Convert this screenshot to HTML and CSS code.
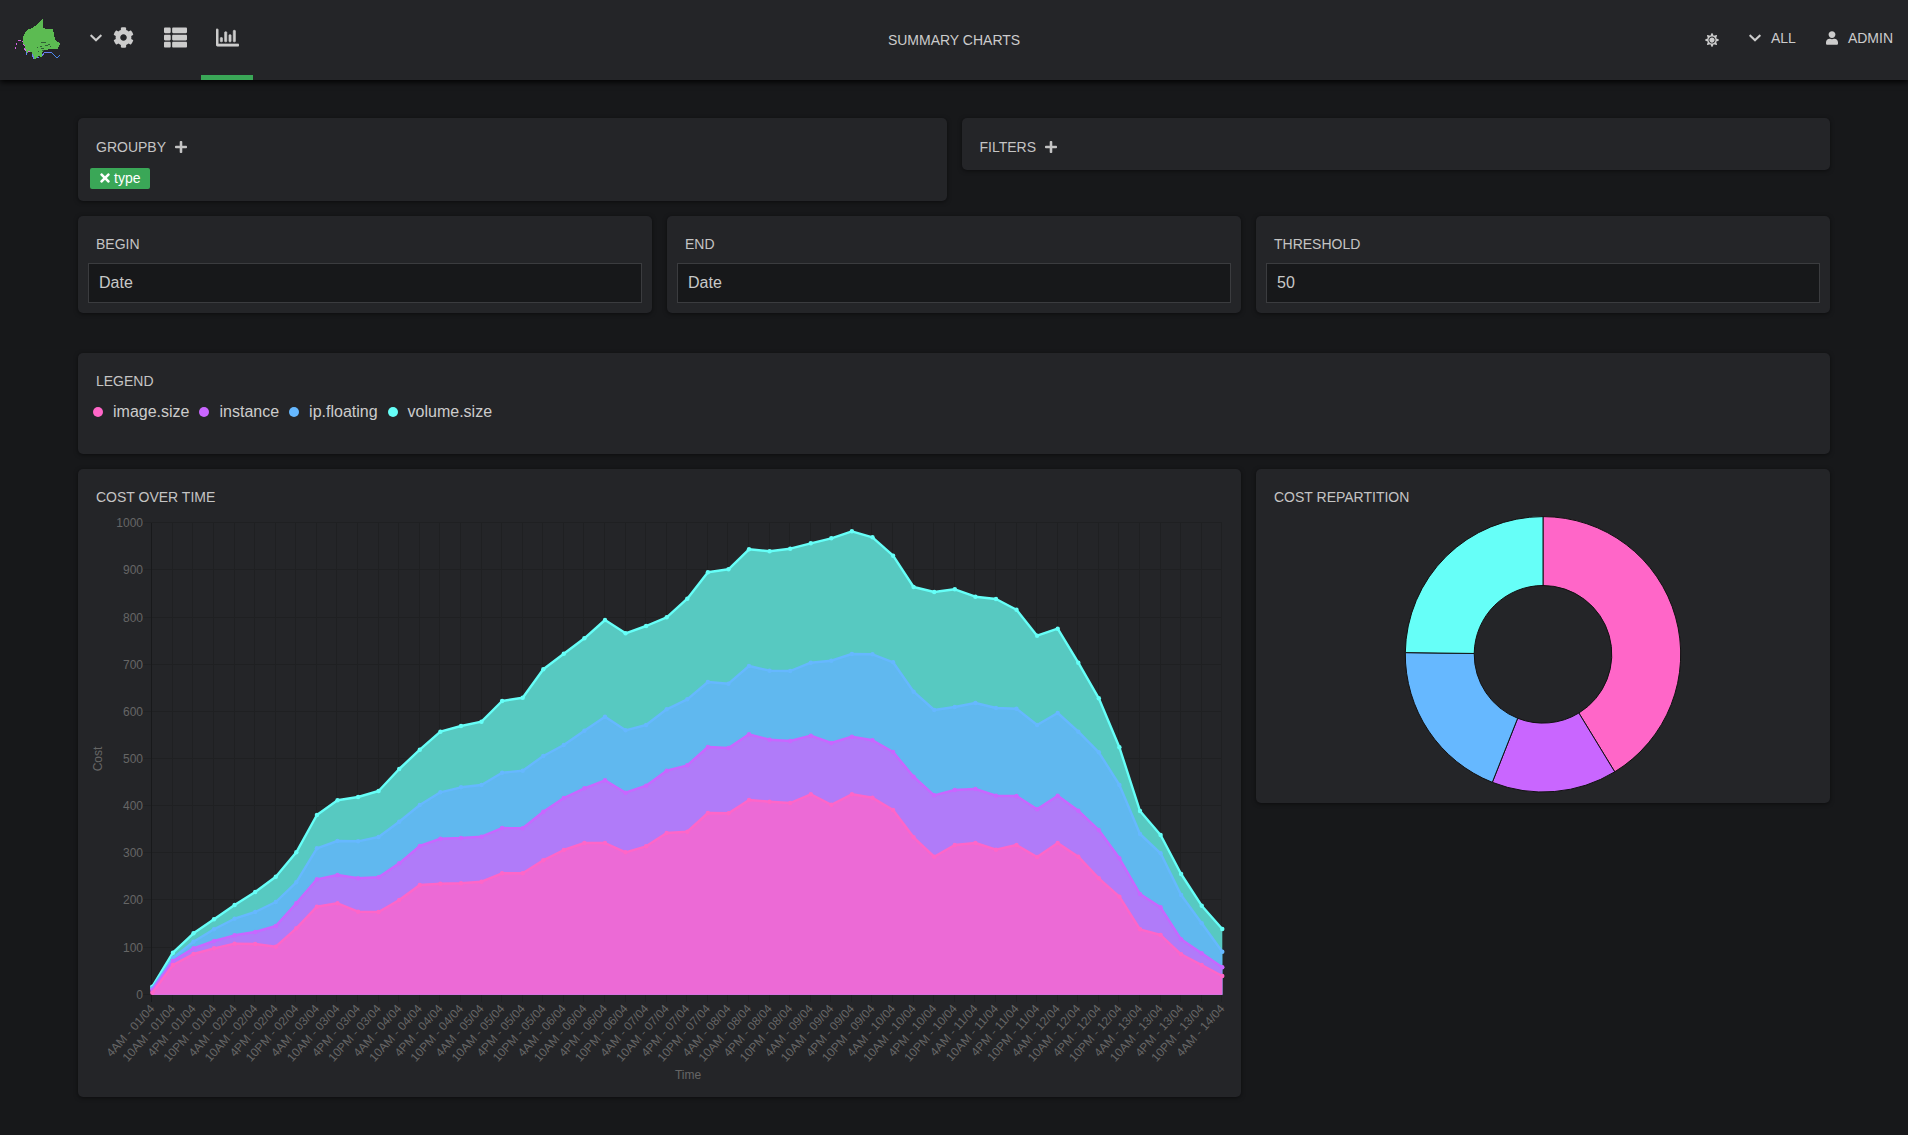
FILE: index.html
```html
<!DOCTYPE html>
<html lang="en">
<head>
<meta charset="utf-8">
<title>Summary charts</title>
<link rel="stylesheet" href="styles.css">
</head>
<body>
<header class="navbar">
  <nav class="nav-left">
    <svg class="logo" viewBox="14 17 48 44" shape-rendering="crispEdges" aria-label="logo">
      <path class="logo-head" d="M43 19V28L46 29H53L54 34L55 40L58 42L60 44L57 49.5L51 49L44 50L42 52L43 55L41 57L38 56L36 59H33L32 52L29 51.5L27 53L25 47L23 43V37L25 33L28 29.500L32 28L35 26L38 23.500Z"/>
      <path class="logo-dark" d="M41 42h5v1h-5zM45 45h3v1h-3zM48 44h2v1h-2zM37 47h1v1h-1zM40 46h2v1h-2zM41 48h3v1h-3zM50 46h1v1h-1zM38 51h1v1h-1zM42 50h2v1h-2z"/>
      <path class="logo-pink" d="M15 49l1-2M16.500 45l.5-2M18 41l1-1h2M22 41l1 1M23 44l2 2M24 48l2 3M28 51l2 0"/>
      <path class="logo-trace-a" d="M26 52l1 3M32 54l2 5M37 57l2 1M42 56l3-4h4l2 0"/>
      <path class="logo-trace-b" d="M51 52l3 3l3 3l3-3"/>
    </svg>
    <svg class="icon-chevron chevron-left" viewBox="0 0 448 512"><path d="M207.029 381.476L12.686 187.132c-9.373-9.373-9.373-24.569 0-33.941l22.667-22.667c9.357-9.357 24.522-9.375 33.901-.04L224 284.505l154.745-154.021c9.379-9.335 24.544-9.317 33.901.04l22.667 22.667c9.373 9.373 9.373 24.569 0 33.941L240.971 381.476c-9.373 9.372-24.569 9.372-33.942 0z"/></svg>
    <svg class="icon-gear" viewBox="0 0 512 512"><path d="M487.4 315.7l-42.6-24.6c4.3-23.2 4.3-47 0-70.2l42.6-24.6c4.9-2.8 7.1-8.6 5.500-14-11.100-35.600-30-67.800-54.700-94.600-3.800-4.100-10-5.100-14.800-2.300L380.800 110c-17.900-15.400-38.500-27.300-60.800-35.100V25.800c0-5.600-3.900-10.500-9.400-11.700-36.700-8.200-74.300-7.800-109.200 0-5.500 1.200-9.400 6.100-9.400 11.700V75c-22.200 7.900-42.800 19.800-60.800 35.100L88.700 85.500c-4.900-2.800-11-1.900-14.800 2.300-24.700 26.700-43.600 58.900-54.700 94.600-1.700 5.400.6 11.200 5.500 14L67.300 221c-4.300 23.200-4.300 47 0 70.200l-42.600 24.600c-4.900 2.800-7.100 8.600-5.500 14 11.100 35.600 30 67.800 54.700 94.600 3.800 4.100 10 5.100 14.800 2.300l42.600-24.600c17.900 15.400 38.500 27.300 60.800 35.100v49.200c0 5.600 3.900 10.500 9.400 11.700 36.700 8.200 74.300 7.800 109.200 0 5.500-1.200 9.400-6.100 9.400-11.700v-49.200c22.200-7.900 42.800-19.800 60.800-35.100l42.600 24.600c4.900 2.800 11 1.900 14.800-2.300 24.700-26.700 43.600-58.900 54.700-94.600 1.500-5.500-.7-11.300-5.600-14.100zM256 336c-44.100 0-80-35.900-80-80s35.900-80 80-80 80 35.900 80 80-35.900 80-80 80z"/></svg>
    <a class="nav-link">
      <svg class="icon-nav" viewBox="0 0 512 512"><path d="M149.333 216v80c0 13.255-10.745 24-24 24H24c-13.255 0-24-10.745-24-24v-80c0-13.255 10.745-24 24-24h101.333c13.255 0 24 10.745 24 24zM0 376v80c0 13.255 10.745 24 24 24h101.333c13.255 0 24-10.745 24-24v-80c0-13.255-10.745-24-24-24H24c-13.255 0-24 10.745-24 24zM125.333 32H24C10.745 32 0 42.745 0 56v80c0 13.255 10.745 24 24 24h101.333c13.255 0 24-10.745 24-24V56c0-13.255-10.745-24-24-24zm80 448H488c13.255 0 24-10.745 24-24v-80c0-13.255-10.745-24-24-24H205.333c-13.255 0-24 10.745-24 24v80c0 13.255 10.745 24 24 24zm-24-424v80c0 13.255 10.745 24 24 24H488c13.255 0 24-10.745 24-24V56c0-13.255-10.745-24-24-24H205.333c-13.255 0-24 10.745-24 24zm24 264H488c13.255 0 24-10.745 24-24v-80c0-13.255-10.745-24-24-24H205.333c-13.255 0-24 10.745-24 24v80c0 13.255 10.745 24 24 24z"/></svg>
    </a>
    <a class="nav-link is-active">
      <svg class="icon-nav icon-bars" viewBox="0 0 512 512"><path d="M396.8 352h22.400c6.400 0 12.800-6.400 12.800-12.800V108.800c0-6.400-6.400-12.800-12.800-12.800h-22.400c-6.400 0-12.800 6.400-12.800 12.800v230.400c0 6.400 6.400 12.800 12.800 12.800zm-192 0h22.400c6.400 0 12.800-6.400 12.800-12.800V140.800c0-6.400-6.400-12.800-12.800-12.800h-22.400c-6.400 0-12.800 6.400-12.800 12.800v198.400c0 6.400 6.400 12.800 12.800 12.800zm96 0h22.400c6.400 0 12.800-6.400 12.800-12.800V204.800c0-6.400-6.400-12.800-12.800-12.800h-22.400c-6.400 0-12.800 6.400-12.800 12.800v134.400c0 6.400 6.400 12.800 12.800 12.800zM496 400H48V80c0-8.840-7.160-16-16-16H16C7.160 64 0 71.160 0 80v336c0 17.670 14.330 32 32 32h464c8.840 0 16-7.160 16-16v-16c0-8.840-7.160-16-16-16zm-387.200-48h22.400c6.400 0 12.800-6.400 12.800-12.800v-70.400c0-6.400-6.400-12.800-12.800-12.800h-22.400c-6.400 0-12.800 6.400-12.800 12.800v70.400c0 6.400 6.400 12.800 12.800 12.800z"/></svg>
    </a>
  </nav>
  <div class="nav-title">SUMMARY CHARTS</div>
  <div class="nav-right">
    <svg class="icon-sun" viewBox="0 0 512 512"><path d="M256 160c-52.900 0-96 43.100-96 96s43.100 96 96 96 96-43.100 96-96-43.100-96-96-96zm246.400 80.500l-94.700-47.300 33.500-100.400c4.500-13.600-8.400-26.500-21.900-21.900l-100.400 33.500-47.400-94.800c-6.400-12.800-24.600-12.800-31 0l-47.300 94.700L92.700 70.800c-13.600-4.500-26.500 8.400-21.900 21.900l33.500 100.400-94.700 47.400c-12.800 6.400-12.800 24.600 0 31l94.700 47.300-33.500 100.500c-4.500 13.600 8.400 26.500 21.900 21.900l100.400-33.500 47.300 94.700c6.400 12.800 24.600 12.800 31 0l47.300-94.700 100.400 33.500c13.600 4.500 26.500-8.400 21.900-21.900l-33.500-100.400 94.700-47.300c13-6.500 13-24.700.2-31.100zm-155.900 106c-49.900 49.900-131.100 49.900-181 0-49.900-49.900-49.900-131.100 0-181 49.900-49.900 131.100-49.900 181 0 49.900 49.900 49.900 131.100 0 181z"/></svg>
    <span class="nav-menu nav-menu-all">
      <svg class="icon-chevron" viewBox="0 0 448 512"><path d="M207.029 381.476L12.686 187.132c-9.373-9.373-9.373-24.569 0-33.941l22.667-22.667c9.357-9.357 24.522-9.375 33.901-.04L224 284.505l154.745-154.021c9.379-9.335 24.544-9.317 33.901.04l22.667 22.667c9.373 9.373 9.373 24.569 0 33.941L240.971 381.476c-9.373 9.372-24.569 9.372-33.942 0z"/></svg>
      ALL
    </span>
    <span class="nav-menu">
      <svg class="icon-user" viewBox="0 0 448 512"><path d="M224 256c70.700 0 128-57.300 128-128S294.700 0 224 0 96 57.300 96 128s57.300 128 128 128zm89.600 32h-16.700c-22.200 10.200-46.900 16-72.900 16s-50.600-5.800-72.900-16h-16.700C60.200 288 0 348.200 0 422.400V464c0 26.500 21.500 48 48 48h352c26.500 0 48-21.500 48-48v-41.600c0-74.200-60.200-134.400-134.400-134.400z"/></svg>
      ADMIN
    </span>
  </div>
</header>

<main class="page">
  <section class="row row-two">
    <div class="card card-groupby">
      <h2 class="card-title card-title-action">GROUPBY
        <svg class="icon-plus" viewBox="0 0 448 512"><path d="M416 208H272V64c0-17.670-14.330-32-32-32h-32c-17.670 0-32 14.330-32 32v144H32c-17.670 0-32 14.330-32 32v32c0 17.670 14.330 32 32 32h144v144c0 17.670 14.330 32 32 32h32c17.670 0 32-14.330 32-32V304h144c17.670 0 32-14.330 32-32v-32c0-17.670-14.330-32-32-32z"/></svg>
      </h2>
      <span class="tag">
        <svg class="icon-x" viewBox="0 0 352 512"><path d="M242.720 256l100.070-100.070c12.280-12.280 12.280-32.190 0-44.480l-22.240-22.240c-12.280-12.280-32.190-12.280-44.480 0L176 189.280 75.930 89.210c-12.280-12.280-32.190-12.280-44.480 0L9.210 111.450c-12.280 12.280-12.280 32.190 0 44.480L109.280 256 9.210 356.070c-12.280 12.280-12.280 32.190 0 44.480l22.240 22.240c12.280 12.280 32.200 12.280 44.480 0L176 322.720l100.070 100.070c12.280 12.280 32.200 12.280 44.480 0l22.240-22.240c12.280-12.280 12.280-32.190 0-44.480L242.720 256z"/></svg>
        type
      </span>
    </div>
    <div class="card card-filters">
      <h2 class="card-title card-title-action">FILTERS
        <svg class="icon-plus" viewBox="0 0 448 512"><path d="M416 208H272V64c0-17.670-14.330-32-32-32h-32c-17.670 0-32 14.330-32 32v144H32c-17.670 0-32 14.330-32 32v32c0 17.670 14.330 32 32 32h144v144c0 17.670 14.330 32 32 32h32c17.670 0 32-14.330 32-32V304h144c17.670 0 32-14.330 32-32v-32c0-17.670-14.330-32-32-32z"/></svg>
      </h2>
    </div>
  </section>

  <section class="row row-three">
    <div class="card card-field">
      <h2 class="card-title">BEGIN</h2>
      <input class="field" placeholder="Date">
    </div>
    <div class="card card-field">
      <h2 class="card-title">END</h2>
      <input class="field" placeholder="Date">
    </div>
    <div class="card card-field">
      <h2 class="card-title">THRESHOLD</h2>
      <input class="field" value="50">
    </div>
  </section>

  <section class="card card-legend">
    <h2 class="card-title">LEGEND</h2>
    <ul class="legend">
      <li class="legend-item"><span class="dot dot-image"></span>image.size</li>
      <li class="legend-item"><span class="dot dot-instance"></span>instance</li>
      <li class="legend-item"><span class="dot dot-ip"></span>ip.floating</li>
      <li class="legend-item"><span class="dot dot-volume"></span>volume.size</li>
    </ul>
  </section>

  <section class="row row-three row-charts">
    <div class="card card-area">
      <h2 class="card-title">COST OVER TIME</h2>
      <svg id="area-chart" class="chart-area" viewBox="78 505 1163 592"></svg>
    </div>
    <div class="card card-pie">
      <h2 class="card-title">COST REPARTITION</h2>
      <svg id="pie-chart" class="chart-pie" viewBox="1256 505 574 298"></svg>
    </div>
  </section>
</main>
<script src="chart.js"></script>
</body>
</html>
```
FILE: styles.css
```css
* { box-sizing: border-box; }
html, body { margin: 0; padding: 0; }
body {
  min-height: 1135px;
  background: #17181a;
  color: #cccccc;
  font-family: "Liberation Sans", Arial, sans-serif;
  font-size: 14px;
}
svg { display: block; fill: currentColor; }

.navbar {
  display: grid;
  grid-template-columns: 1fr auto 1fr;
  align-items: center;
  height: 80px;
  background: #242528;
  box-shadow: 0 2px 6px #000;
}
.nav-left { display: flex; align-items: center; height: 80px; }
.logo { width: 48px; height: 44px; margin: 0 0 2px 14px; }
.logo-head { fill: #5cbb52; }
.logo-dark { fill: #2f5f35; }
.logo-pink { fill: none; stroke: #d65fe0; stroke-width: 1; }
.logo-trace-a { fill: none; stroke: #6a7cf0; stroke-width: 1; }
.logo-trace-b { fill: none; stroke: #4a86e8; stroke-width: 1; }
.icon-chevron { width: 12px; height: 14px; }
.chevron-left { margin: 0 0 5px 28px; }
.icon-gear { width: 21px; height: 21px; margin: 0 15px 5px 11px; }
.nav-link {
  display: flex;
  align-items: center;
  justify-content: center;
  width: 52px;
  height: 80px;
  border-bottom: 5px solid transparent;
}
.nav-link.is-active { border-bottom-color: #3aa757; }
.icon-nav { width: 23px; height: 23px; }
.icon-bars { stroke: currentColor; stroke-width: 14; }
.nav-title { font-size: 14px; text-align: center; }
.nav-right {
  display: flex;
  align-items: center;
  justify-content: flex-end;
  padding: 0 15px 4px 0;
}
.icon-sun { width: 14px; height: 14px; margin: 4px 30px 0 0; }
.nav-menu { display: flex; align-items: center; gap: 10px; }
.nav-menu-all { margin-right: 30px; }
.icon-user { width: 12px; height: 14px; }

.page {
  display: flex;
  flex-direction: column;
  padding: 38px 78px 0;
}
.row { display: grid; gap: 15px; align-items: start; }
.row-two { grid-template-columns: 1fr 1fr; margin-bottom: 15px; }
.row-three { grid-template-columns: repeat(3, 1fr); }

.card {
  background: #242528;
  border-radius: 5px;
  box-shadow: 0 1px 4px rgba(0, 0, 0, .5);
}
.card-title {
  display: flex;
  align-items: center;
  gap: 9px;
  height: 36px;
  margin: 0;
  padding: 20px 18px 0;
  font-size: 14px;
  line-height: 16px;
  font-weight: 400;
  color: #c4c4c4;
}
.card-title-action { padding-top: 22px; }
.icon-plus { width: 12px; height: 14px; }
.card-groupby { height: 83px; }
.card-filters { height: 52px; }
.tag {
  display: inline-flex;
  align-items: center;
  gap: 4px;
  height: 21px;
  margin: 14px 0 0 12px;
  padding: 0 10px 1px;
  border-radius: 2px;
  background: #3aa757;
  color: #fff;
  font-size: 14px;
}
.icon-x { width: 10px; height: 14px; }

.card-field { height: 97px; padding-bottom: 10px; }
.field {
  display: block;
  width: calc(100% - 20px);
  height: 40px;
  margin: 11px 10px 0;
  padding: 0 10px;
  border: 1px solid #3b3c3f;
  background: #17181a;
  color: #c8c8c8;
  font: 16px "Liberation Sans", Arial, sans-serif;
  outline: none;
}
.field::placeholder { color: #c8c8c8; opacity: 1; }

.card-legend { height: 101px; margin: 40px 0 15px; }
.legend {
  display: flex;
  gap: 10px;
  margin: 0;
  padding: 13px 0 0 15px;
  list-style: none;
  font-size: 16px;
  line-height: 20px;
}
.legend-item { display: flex; align-items: center; gap: 10px; }
.dot { width: 10px; height: 10px; border-radius: 50%; }
.dot-image { background: #ff66c8; }
.dot-instance { background: #c966ff; }
.dot-ip { background: #66b8ff; }
.dot-volume { background: #66fff8; }

.card-area { grid-column: span 2; height: 628px; }
.card-pie { height: 334px; }
.chart-area { width: 1163px; height: 592px; }
.chart-pie { width: 574px; height: 298px; }

.grid-line { stroke: #1f2022; stroke-width: 1; shape-rendering: crispEdges; }
.grid-axis { stroke: #18191b; stroke-width: 1; shape-rendering: crispEdges; }
.axis-text { fill: #666; font: 12px "Liberation Sans", Arial, sans-serif; }
.series-line { fill: none; stroke-width: 2.4; stroke-linejoin: round; }
.pie-slice { stroke: #111; stroke-width: 1; }
```
FILE: chart.js
```js
// Stacked cost series, as cumulative screen heights sampled in three spans.
const SPANS = [
  { base: 600, from: 0 },
  { base: 520, from: 18 },
  { base: 520, from: 36 }
];
const SERIES = [
  {
    color: '#66fff8', fill: '#57c9c1',
    samples: [
      [1160,1058,1000,958,915,876,830,757,645,601,591,573,507,449,395,378,365,303],
      [533,448,401,355,300,340,318,292,236,157,148,88,94,86,70,55,34,52],
      [107,201,216,208,230,237,269,347,326,428,535,682,873,945,1062,1157,1227]
    ]
  },
  {
    color: '#66b8ff', fill: '#60b8ef',
    samples: [
      [1165,1075,1025,988,956,936,906,847,745,723,724,711,665,615,577,562,555,518],
      [752,708,675,632,590,631,615,568,538,486,491,438,452,453,428,422,402,403],
      [427,515,570,561,549,564,566,615,579,635,697,795,942,1000,1125,1210,1295]
    ]
  },
  {
    color: '#c966ff', fill: '#b07bf9',
    samples: [
      [1170,1083,1045,1023,1006,996,978,910,838,825,835,832,790,738,716,714,710,684],
      [925,875,834,805,781,818,797,752,736,681,684,643,659,663,647,669,650,661],
      [696,770,826,810,807,827,828,868,827,872,930,1015,1122,1162,1258,1300,1342]
    ]
  },
  {
    color: '#ff66c8', fill: '#ec6ad6',
    samples: [
      [1178,1095,1062,1045,1031,1032,1040,985,920,910,935,936,900,855,851,850,845,820],
      [1060,1021,990,969,969,997,979,939,935,879,880,840,845,849,823,854,823,833],
      [870,952,1010,975,969,989,975,1011,969,1010,1075,1130,1228,1245,1303,1335,1368]
    ]
  }
];

const NS = 'http://www.w3.org/2000/svg';
function el(parent, name, attrs, text) {
  const node = document.createElementNS(NS, name);
  Object.keys(attrs).forEach(k => node.setAttribute(k, attrs[k]));
  if (text !== undefined) node.textContent = text;
  parent.appendChild(node);
  return node;
}

function drawArea(svg) {
  const left = 152.3, right = 1222.3, top = 523.3, bottom = 994.7;
  const count = 53;
  const step = (right - left) / (count - 1);
  const xAt = i => left + step * i;
  const hours = ['4AM', '10AM', '4PM', '10PM'];

  for (let v = 0; v <= 10; v++) {
    const y = Math.round(bottom - (bottom - top) * v / 10) - 0.5;
    el(svg, 'line', { class: 'grid-line', x1: 143, x2: right, y1: y, y2: y });
    el(svg, 'text', { class: 'axis-text', x: 143, y: y + 4, 'text-anchor': 'end' }, String(v * 100));
  }
  for (let i = 0; i < count; i++) {
    const x = Math.round(xAt(i)) - 0.5;
    el(svg, 'line', { class: i ? 'grid-line' : 'grid-axis', x1: x, x2: x, y1: top, y2: 1002 });
    const day = String(1 + Math.floor(i / 4)).padStart(2, '0');
    const lx = xAt(i) + 3, ly = 1009;
    el(svg, 'text', {
      class: 'axis-text', x: lx, y: ly, 'text-anchor': 'end',
      transform: `rotate(-48 ${lx} ${ly})`
    }, `${hours[i % 4]} - ${day}/04`);
  }
  el(svg, 'text', { class: 'axis-text', x: 688, y: 1079, 'text-anchor': 'middle' }, 'Time');
  el(svg, 'text', {
    class: 'axis-text', x: 101.5, y: 759, 'text-anchor': 'middle',
    transform: 'rotate(-90 101.5 759)'
  }, 'Cost');

  SERIES.forEach(s => {
    const pts = [];
    s.samples.forEach((values, span) => {
      values.forEach((z, k) => {
        const i = SPANS[span].from + k;
        pts.push([xAt(i).toFixed(1), (SPANS[span].base + z / 3).toFixed(1)]);
      });
    });
    const line = pts.map(p => p.join(',')).join(' ');
    el(svg, 'polygon', { points: `${left},${bottom} ${line} ${right},${bottom}`, fill: s.fill });
    s.line = line;
    s.pts = pts;
  });
  SERIES.forEach(s => {
    el(svg, 'polyline', { class: 'series-line', points: s.line, stroke: s.color });
    s.pts.forEach(p => el(svg, 'circle', { cx: p[0], cy: p[1], r: 2.2, fill: s.color }));
  });
}

function drawPie(svg) {
  const cx = 1543, cy = 654.3, R = 137.7, r = 68.8;
  const slices = [
    { to: 148.6, color: '#ff66c8' },
    { to: 201.6, color: '#c966ff' },
    { to: 270.7, color: '#66b8ff' },
    { to: 360, color: '#66fff8' }
  ];
  const at = (rad, deg) => {
    const a = deg * Math.PI / 180;
    return `${(cx + rad * Math.sin(a)).toFixed(2)} ${(cy - rad * Math.cos(a)).toFixed(2)}`;
  };
  let from = 0;
  slices.forEach(s => {
    const large = s.to - from > 180 ? 1 : 0;
    const d = `M${at(R, from)}A${R} ${R} 0 ${large} 1 ${at(R, s.to)}` +
      `L${at(r, s.to)}A${r} ${r} 0 ${large} 0 ${at(r, from)}Z`;
    el(svg, 'path', { class: 'pie-slice', d, fill: s.color });
    from = s.to;
  });
}

drawArea(document.getElementById('area-chart'));
drawPie(document.getElementById('pie-chart'));
```
